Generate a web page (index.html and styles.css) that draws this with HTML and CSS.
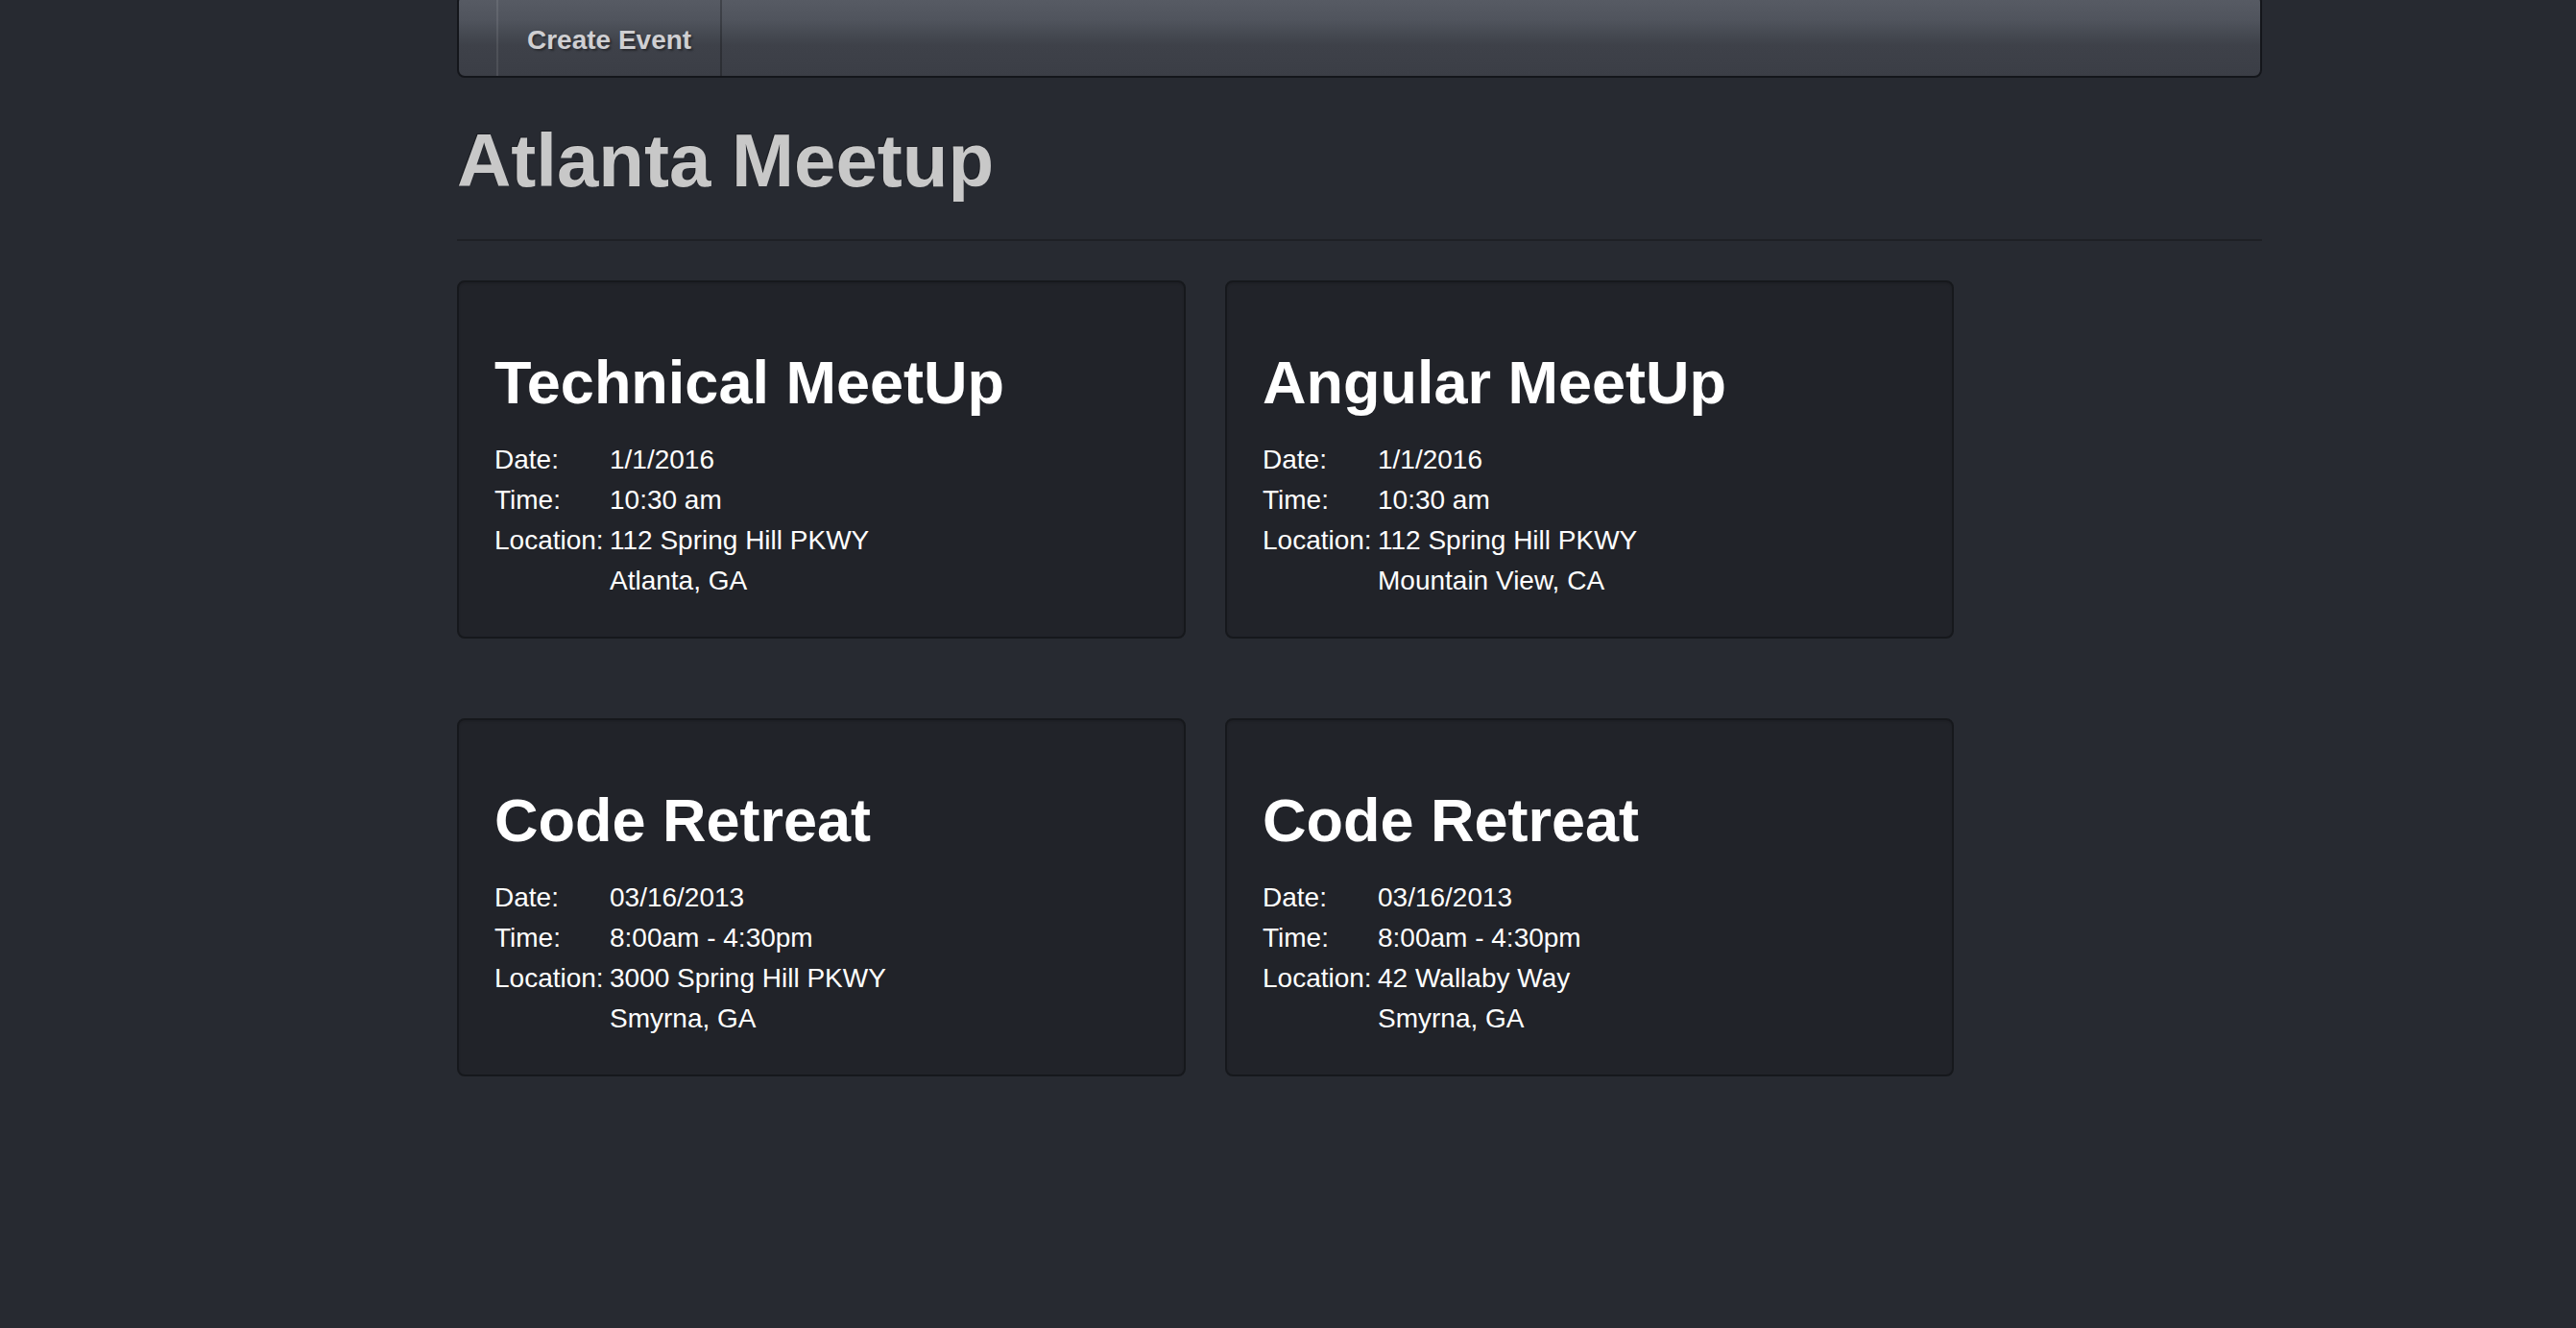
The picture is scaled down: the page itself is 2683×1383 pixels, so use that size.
FILE: index.html
```html
<!DOCTYPE html>
<html lang="en">
<head>
<meta charset="utf-8">
<title>Atlanta Meetup</title>
<link rel="stylesheet" href="styles.css">
</head>
<body>
<div class="page">
  <nav class="navbar">
    <div class="brand"></div>
    <a class="nav-item" href="#">Create Event</a>
  </nav>
  <header class="page-header">
    <h1>Atlanta Meetup</h1>
  </header>
  <div class="events">
    <div class="card">
      <h2>Technical MeetUp</h2>
      <div class="details">
        <span class="label">Date:</span><span>1/1/2016</span>
        <span class="label">Time:</span><span>10:30 am</span>
        <span class="label">Location:</span><span>112 Spring Hill PKWY</span>
        <span class="label"></span><span>Atlanta, GA</span>
      </div>
    </div>
    <div class="card">
      <h2>Angular MeetUp</h2>
      <div class="details">
        <span class="label">Date:</span><span>1/1/2016</span>
        <span class="label">Time:</span><span>10:30 am</span>
        <span class="label">Location:</span><span>112 Spring Hill PKWY</span>
        <span class="label"></span><span>Mountain View, CA</span>
      </div>
    </div>
    <div class="card">
      <h2>Code Retreat</h2>
      <div class="details">
        <span class="label">Date:</span><span>03/16/2013</span>
        <span class="label">Time:</span><span>8:00am - 4:30pm</span>
        <span class="label">Location:</span><span>3000 Spring Hill PKWY</span>
        <span class="label"></span><span>Smyrna, GA</span>
      </div>
    </div>
    <div class="card">
      <h2>Code Retreat</h2>
      <div class="details">
        <span class="label">Date:</span><span>03/16/2013</span>
        <span class="label">Time:</span><span>8:00am - 4:30pm</span>
        <span class="label">Location:</span><span>42 Wallaby Way</span>
        <span class="label"></span><span>Smyrna, GA</span>
      </div>
    </div>
  </div>
</div>
</body>
</html>
```
FILE: styles.css
```css
html, body {
  margin: 0;
  padding: 0;
}
body {
  background: #272a31;
  font-family: "Liberation Sans", Arial, Helvetica, sans-serif;
  color: #fff;
  min-height: 1383px;
}
.page {
  width: 1880px;
  margin-left: 476px;
}
.navbar {
  display: flex;
  align-items: stretch;
  height: 87px;
  margin-top: -6px;
  box-sizing: border-box;
  border: 2px solid #14161b;
  border-radius: 8px;
  background: linear-gradient(#585c65 0%, #50545d 30%, #454951 48%, #3e4149 62%, #3b3e46 100%);
}
.brand {
  width: 39px;
}
.nav-item {
  display: flex;
  align-items: center;
  padding: 9px 30px 0 30px;
  border-left: 2px solid rgba(255,255,255,0.09);
  border-right: 2px solid rgba(0,0,0,0.25);
  color: #cfcfd2;
  font-weight: bold;
  font-size: 28px;
  text-decoration: none;
  text-shadow: 2px 2px 2px rgba(0,0,0,0.35);
}
.page-header {
  margin-top: 43px;
  padding-bottom: 39px;
  border-bottom: 2px solid #1e2025;
}
.page-header h1 {
  margin: 0;
  font-size: 78px;
  line-height: 86px;
  font-weight: bold;
  color: #c8c8c8;
  text-shadow: -1px -1px 0 rgba(0,0,0,0.3);
}
.events {
  display: grid;
  grid-template-columns: 759px 759px;
  column-gap: 41px;
  row-gap: 83px;
  margin-top: 41px;
}
.card {
  box-sizing: border-box;
  height: 373px;
  padding: 70px 37px 37px 37px;
  background: #212329;
  border: 2px solid #16181c;
  border-radius: 8px;
  box-shadow: inset 0 2px 2px rgba(0,0,0,0.1);
}
.card h2 {
  margin: 0 0 26px 0;
  font-size: 63px;
  line-height: 68px;
  font-weight: bold;
  color: #fff;
}
.details {
  display: grid;
  grid-template-columns: 120px auto;
  font-size: 28px;
  line-height: 42px;
  color: #fff;
}
```
